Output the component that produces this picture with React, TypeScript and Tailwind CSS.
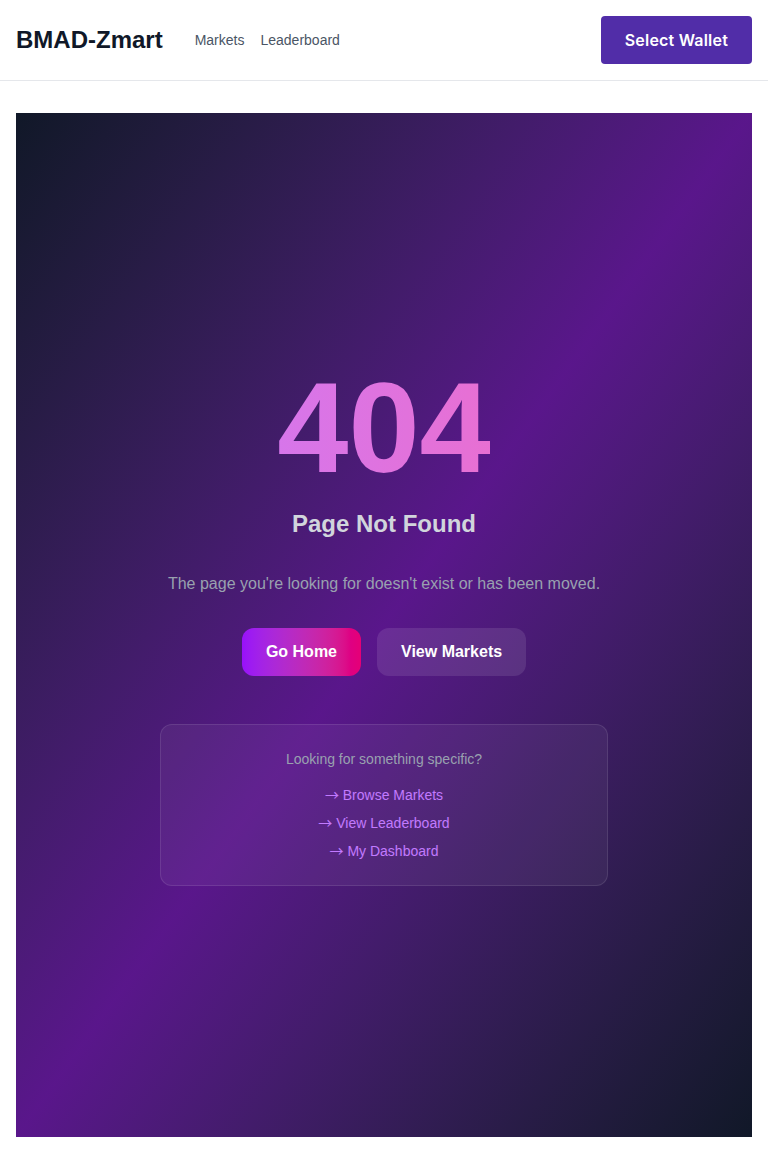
import React from 'react';

const links = ['Browse Markets', 'View Leaderboard', 'My Dashboard'];

function Header() {
  return (
    <header className="flex h-[81px] items-center justify-between border-b border-gray-200 bg-white px-4">
      <div className="flex items-center gap-8">
        <span className="text-2xl font-bold text-gray-900">BMAD-Zmart</span>
        <nav className="flex items-center gap-4 text-sm text-gray-600">
          <a href="#">Markets</a>
          <a href="#">Leaderboard</a>
        </nav>
      </div>
      <button
        type="button"
        className="h-12 rounded-[4px] bg-[#512da8] px-6 text-base font-semibold tracking-[0.2px] text-white"
        style={{ fontFamily: 'Inter, "Open Sans", sans-serif' }}
      >
        Select Wallet
      </button>
    </header>
  );
}

export default function App() {
  return (
    <div className="min-h-screen bg-white font-['Liberation_Sans',Arial,sans-serif]">
      <Header />
      <main className="px-4 py-8">
        <section className="flex h-[1024px] flex-col items-center justify-center bg-linear-to-br from-gray-900 via-purple-900 to-gray-900 px-4 text-center">
          <h1 className="mb-4 w-full bg-linear-to-r from-purple-400 to-pink-400 bg-clip-text text-9xl leading-none font-bold text-transparent">
            404
          </h1>
          <h2 className="mb-8 text-2xl font-semibold text-gray-300">Page Not Found</h2>
          <p className="mb-8 text-base text-gray-400">
            The page you're looking for doesn't exist or has been moved.
          </p>
          <div className="flex gap-4">
            <a
              href="#"
              className="rounded-xl bg-linear-to-r from-purple-600 to-pink-600 px-6 py-3 font-semibold text-white"
            >
              Go Home
            </a>
            <a href="#" className="rounded-xl bg-white/10 px-6 py-3 font-semibold text-white">
              View Markets
            </a>
          </div>
          <div className="mt-12 w-full max-w-md rounded-xl border border-white/10 bg-white/5 p-6">
            <p className="mb-4 text-sm text-gray-400">Looking for something specific?</p>
            <div className="flex flex-col items-center gap-2 text-sm leading-5 text-purple-400">
              {links.map((l) => (
                <a key={l} href="#" className="h-5">
                  <span className="font-['Noto_Sans_CJK_SC',sans-serif] leading-none">→</span> {l}
                </a>
              ))}
            </div>
          </div>
        </section>
      </main>
    </div>
  );
}
